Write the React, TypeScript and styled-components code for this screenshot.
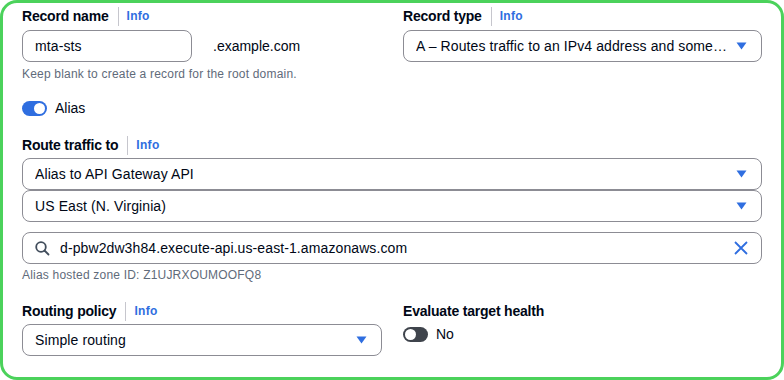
import React from "react";
import styled, { createGlobalStyle } from "styled-components";

const Global = createGlobalStyle`
  html, body { margin: 0; padding: 0; background: #ffffff; }
  body { font-family: "Liberation Sans", Arial, sans-serif; color: #000716; }
  * { box-sizing: border-box; }
`;

const Frame = styled.div`
  width: 784px;
  height: 380px;
  border: 3px solid #4bd25b;
  border-radius: 17px;
  padding: 2px 19px 0 19px;
  background: #ffffff;
`;

const TwoCols = styled.div`
  display: grid;
  grid-template-columns: 360px 359px;
  column-gap: 21px;
`;

const Col = styled.div`
  display: flex;
  flex-direction: column;
`;

const LabelRow = styled.div<{ $mt?: number }>`
  display: flex;
  align-items: center;
  height: 22px;
  margin-top: ${(p) => p.$mt ?? 0}px;
`;

const LabelText = styled.span`
  font-size: 14px;
  font-weight: 700;
  color: #000716;
  letter-spacing: -0.2px;
`;

const Sep = styled.span`
  width: 1px;
  height: 19px;
  background: #c6c6cd;
  margin: 0 8px 0 9px;
`;

const InfoLink = styled.span`
  font-size: 12px;
  font-weight: 700;
  color: #2f6ee0;
  letter-spacing: 0.3px;
`;

const Box = styled.div<{ $mt?: number; $w?: string }>`
  display: flex;
  align-items: center;
  height: 32px;
  width: ${(p) => p.$w ?? "100%"};
  margin-top: ${(p) => p.$mt ?? 0}px;
  border: 1px solid #8c8c94;
  border-radius: 8px;
  padding: 0 12px 0 12px;
  font-size: 14px;
  color: #000716;
  background: #fff;
`;

const BoxText = styled.span`
  flex: 1;
  white-space: nowrap;
  overflow: hidden;
  text-overflow: ellipsis;
  letter-spacing: 0.1px;
`;

const NameRow = styled.div`
  display: flex;
  align-items: center;
  margin-top: 3px;
`;

const Suffix = styled.span`
  font-size: 14px;
  margin-left: 21px;
  color: #000716;
`;

const Hint = styled.div<{ $mt?: number }>`
  font-size: 12px;
  line-height: 16px;
  color: #5f6b7a;
  margin-top: ${(p) => p.$mt ?? 0}px;
  letter-spacing: 0.2px;
`;

const ToggleRow = styled.div<{ $mt?: number }>`
  display: flex;
  align-items: center;
  height: 22px;
  margin-top: ${(p) => p.$mt ?? 0}px;
  gap: 8px;
  font-size: 14px;
`;

const Track = styled.span<{ $on: boolean }>`
  position: relative;
  width: 25px;
  height: 15px;
  border-radius: 8px;
  background: ${(p) => (p.$on ? "#2f6ee0" : "#3f444c")};
`;

const Knob = styled.span<{ $on: boolean }>`
  position: absolute;
  top: 2px;
  left: ${(p) => (p.$on ? "12px" : "2px")};
  width: 11px;
  height: 11px;
  border-radius: 50%;
  background: #fff;
`;

const Full = styled.div`
  display: flex;
  flex-direction: column;
`;

const IconSlot = styled.span`
  display: flex;
  align-items: center;
  justify-content: center;
  width: 16px;
  height: 16px;
`;

const SearchIcon = styled.span`
  display: flex;
  margin-right: 10px;
`;

const Caret = () => (
  <IconSlot>
    <svg width="11" height="8" viewBox="0 0 11 8">
      <path d="M0.5 0.5 L10.5 0.5 L5.5 7.5 Z" fill="#2f6ee0" />
    </svg>
  </IconSlot>
);

const Toggle = ({ on }: { on: boolean }) => (
  <Track $on={on}>
    <Knob $on={on} />
  </Track>
);

const Label = ({ text, info = true, mt }: { text: string; info?: boolean; mt?: number }) => (
  <LabelRow $mt={mt}>
    <LabelText>{text}</LabelText>
    {info && (
      <>
        <Sep />
        <InfoLink>Info</InfoLink>
      </>
    )}
  </LabelRow>
);

export default function App() {
  return (
    <>
      <Global />
      <Frame>
        <TwoCols>
          <Col>
            <Label text="Record name" />
            <NameRow>
              <Box $w="170px">
                <BoxText>mta-sts</BoxText>
              </Box>
              <Suffix>.example.com</Suffix>
            </NameRow>
            <Hint $mt={4}>Keep blank to create a record for the root domain.</Hint>
          </Col>
          <Col>
            <Label text="Record type" />
            <Box $mt={3}>
              <BoxText>A – Routes traffic to an IPv4 address and some…</BoxText>
              <Caret />
            </Box>
          </Col>
        </TwoCols>

        <ToggleRow $mt={15}>
          <Toggle on />
          <span>Alias</span>
        </ToggleRow>

        <Full>
          <Label text="Route traffic to" mt={15} />
          <Box $mt={2}>
            <BoxText>Alias to API Gateway API</BoxText>
            <Caret />
          </Box>
          <Box>
            <BoxText>US East (N. Virginia)</BoxText>
            <Caret />
          </Box>
          <Box $mt={10}>
            <SearchIcon>
              <svg width="15" height="15" viewBox="0 0 15 15" fill="none">
                <circle cx="6" cy="6" r="4.8" stroke="#414d5c" strokeWidth="1.8" />
                <path d="M9.5 9.5 L13.5 13.5" stroke="#414d5c" strokeWidth="1.8" strokeLinecap="round" />
              </svg>
            </SearchIcon>
            <BoxText>d-pbw2dw3h84.execute-api.us-east-1.amazonaws.com</BoxText>
            <IconSlot>
              <svg width="14" height="14" viewBox="0 0 14 14" fill="none">
                <path d="M1 1 L13 13 M13 1 L1 13" stroke="#2f6ee0" strokeWidth="1.8" />
              </svg>
            </IconSlot>
          </Box>
          <Hint $mt={3}>Alias hosted zone ID: Z1UJRXOUMOOFQ8</Hint>
        </Full>

        <TwoCols>
          <Col>
            <Label text="Routing policy" mt={17} />
            <Box $mt={2}>
              <BoxText>Simple routing</BoxText>
              <Caret />
            </Box>
          </Col>
          <Col>
            <Label text="Evaluate target health" info={false} mt={17} />
            <ToggleRow $mt={1}>
              <Toggle on={false} />
              <span>No</span>
            </ToggleRow>
          </Col>
        </TwoCols>
      </Frame>
    </>
  );
}
